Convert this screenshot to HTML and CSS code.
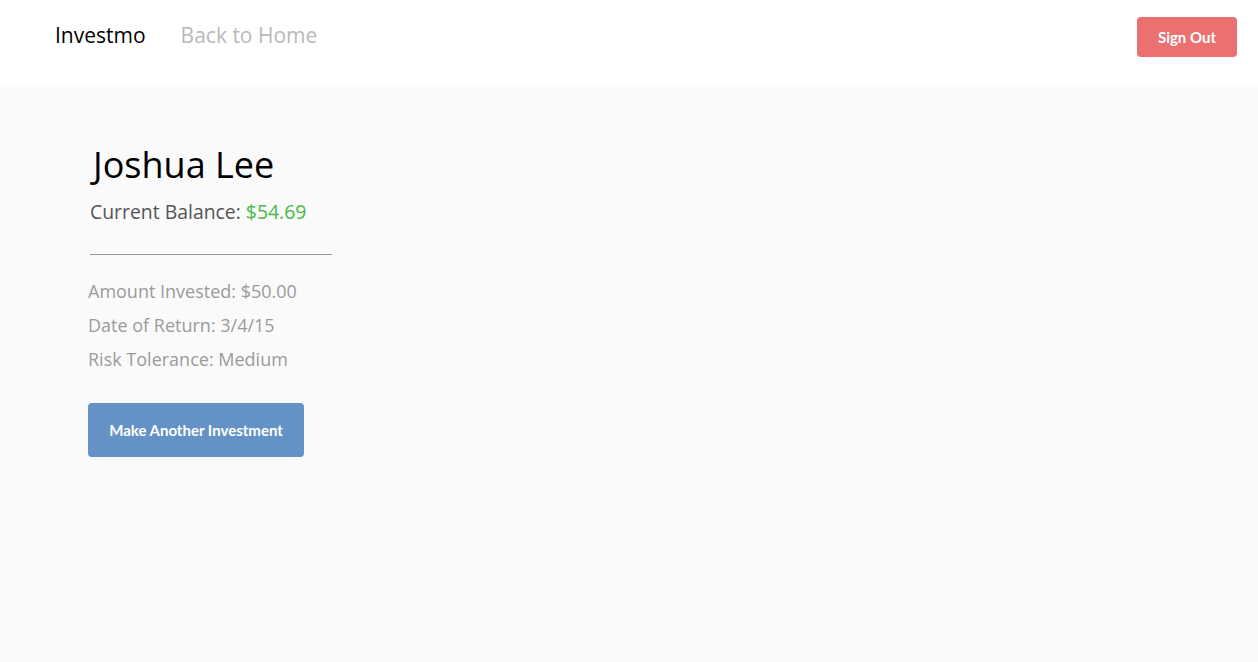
FILE: index.html
```html
<!DOCTYPE html>
<html>
<head>
<meta charset="utf-8">
<link rel="stylesheet" href="styles.css">
</head>
<body>
<header class="navbar">
  <nav class="nav-left">
    <a class="brand" href="#">Investmo</a>
    <a class="nav-link" href="#">Back to Home</a>
  </nav>
  <button class="btn btn-signout">Sign Out</button>
</header>
<main class="content">
  <section class="profile">
    <h1 class="name">Joshua Lee</h1>
    <p class="balance">Current Balance: <span class="amount">$54.69</span></p>
    <hr class="divider">
    <ul class="details">
      <li>Amount Invested: $50.00</li>
      <li>Date of Return: 3/4/15</li>
      <li>Risk Tolerance: Medium</li>
    </ul>
    <button class="btn btn-invest">Make Another Investment</button>
  </section>
</main>
</body>
</html>
```
FILE: styles.css
```css
* { box-sizing: border-box; }
html, body { margin: 0; padding: 0; height: 100%; }
body {
  font-family: "Open Sans", "Liberation Sans", sans-serif;
  background: #fafafa;
  display: flex;
  flex-direction: column;
}
.navbar {
  height: 85px;
  background: #ffffff;
  display: flex;
  align-items: flex-start;
  justify-content: space-between;
  padding: 17px 21px 0 55px;
}
.nav-left {
  display: flex;
  gap: 35px;
  padding-top: 3px;
}
.brand, .nav-link {
  font-size: 21px;
  text-decoration: none;
  line-height: 30px;
}
.brand { color: #000; }
.nav-link { color: #b9b9b9; }
.btn {
  border: none;
  color: #fff;
  font-family: "Lato", "Open Sans", sans-serif;
  font-weight: 700;
  border-radius: 4px;
  cursor: pointer;
}
.btn-signout {
  width: 100px;
  height: 40px;
  background: #ea7170;
  font-size: 15px;
}
.content {
  flex: 1;
  padding: 0 0 0 88px;
}
.profile {
  display: flex;
  flex-direction: column;
  align-items: flex-start;
}
.name {
  margin: 55px 0 0 5px;
  font-size: 36px;
  font-weight: 400;
  line-height: 50px;
  color: #000;
}
.balance {
  margin: 7px 0 0 2px;
  font-size: 19.4px;
  line-height: 30px;
  color: #555;
}
.amount { color: #47b947; }
.divider {
  margin: 27px 0 0 2px;
  width: 242px;
  border: none;
  border-top: 1px solid #999;
  height: 1px;
}
.details {
  list-style: none;
  margin: 19px 0 0 0;
  padding: 0;
  font-size: 18px;
  color: #9a9a9a;
}
.details li {
  line-height: 34px;
}
.btn-invest {
  margin-top: 27px;
  width: 216px;
  height: 54px;
  background: #6592c6;
  font-size: 15px;
}
```
